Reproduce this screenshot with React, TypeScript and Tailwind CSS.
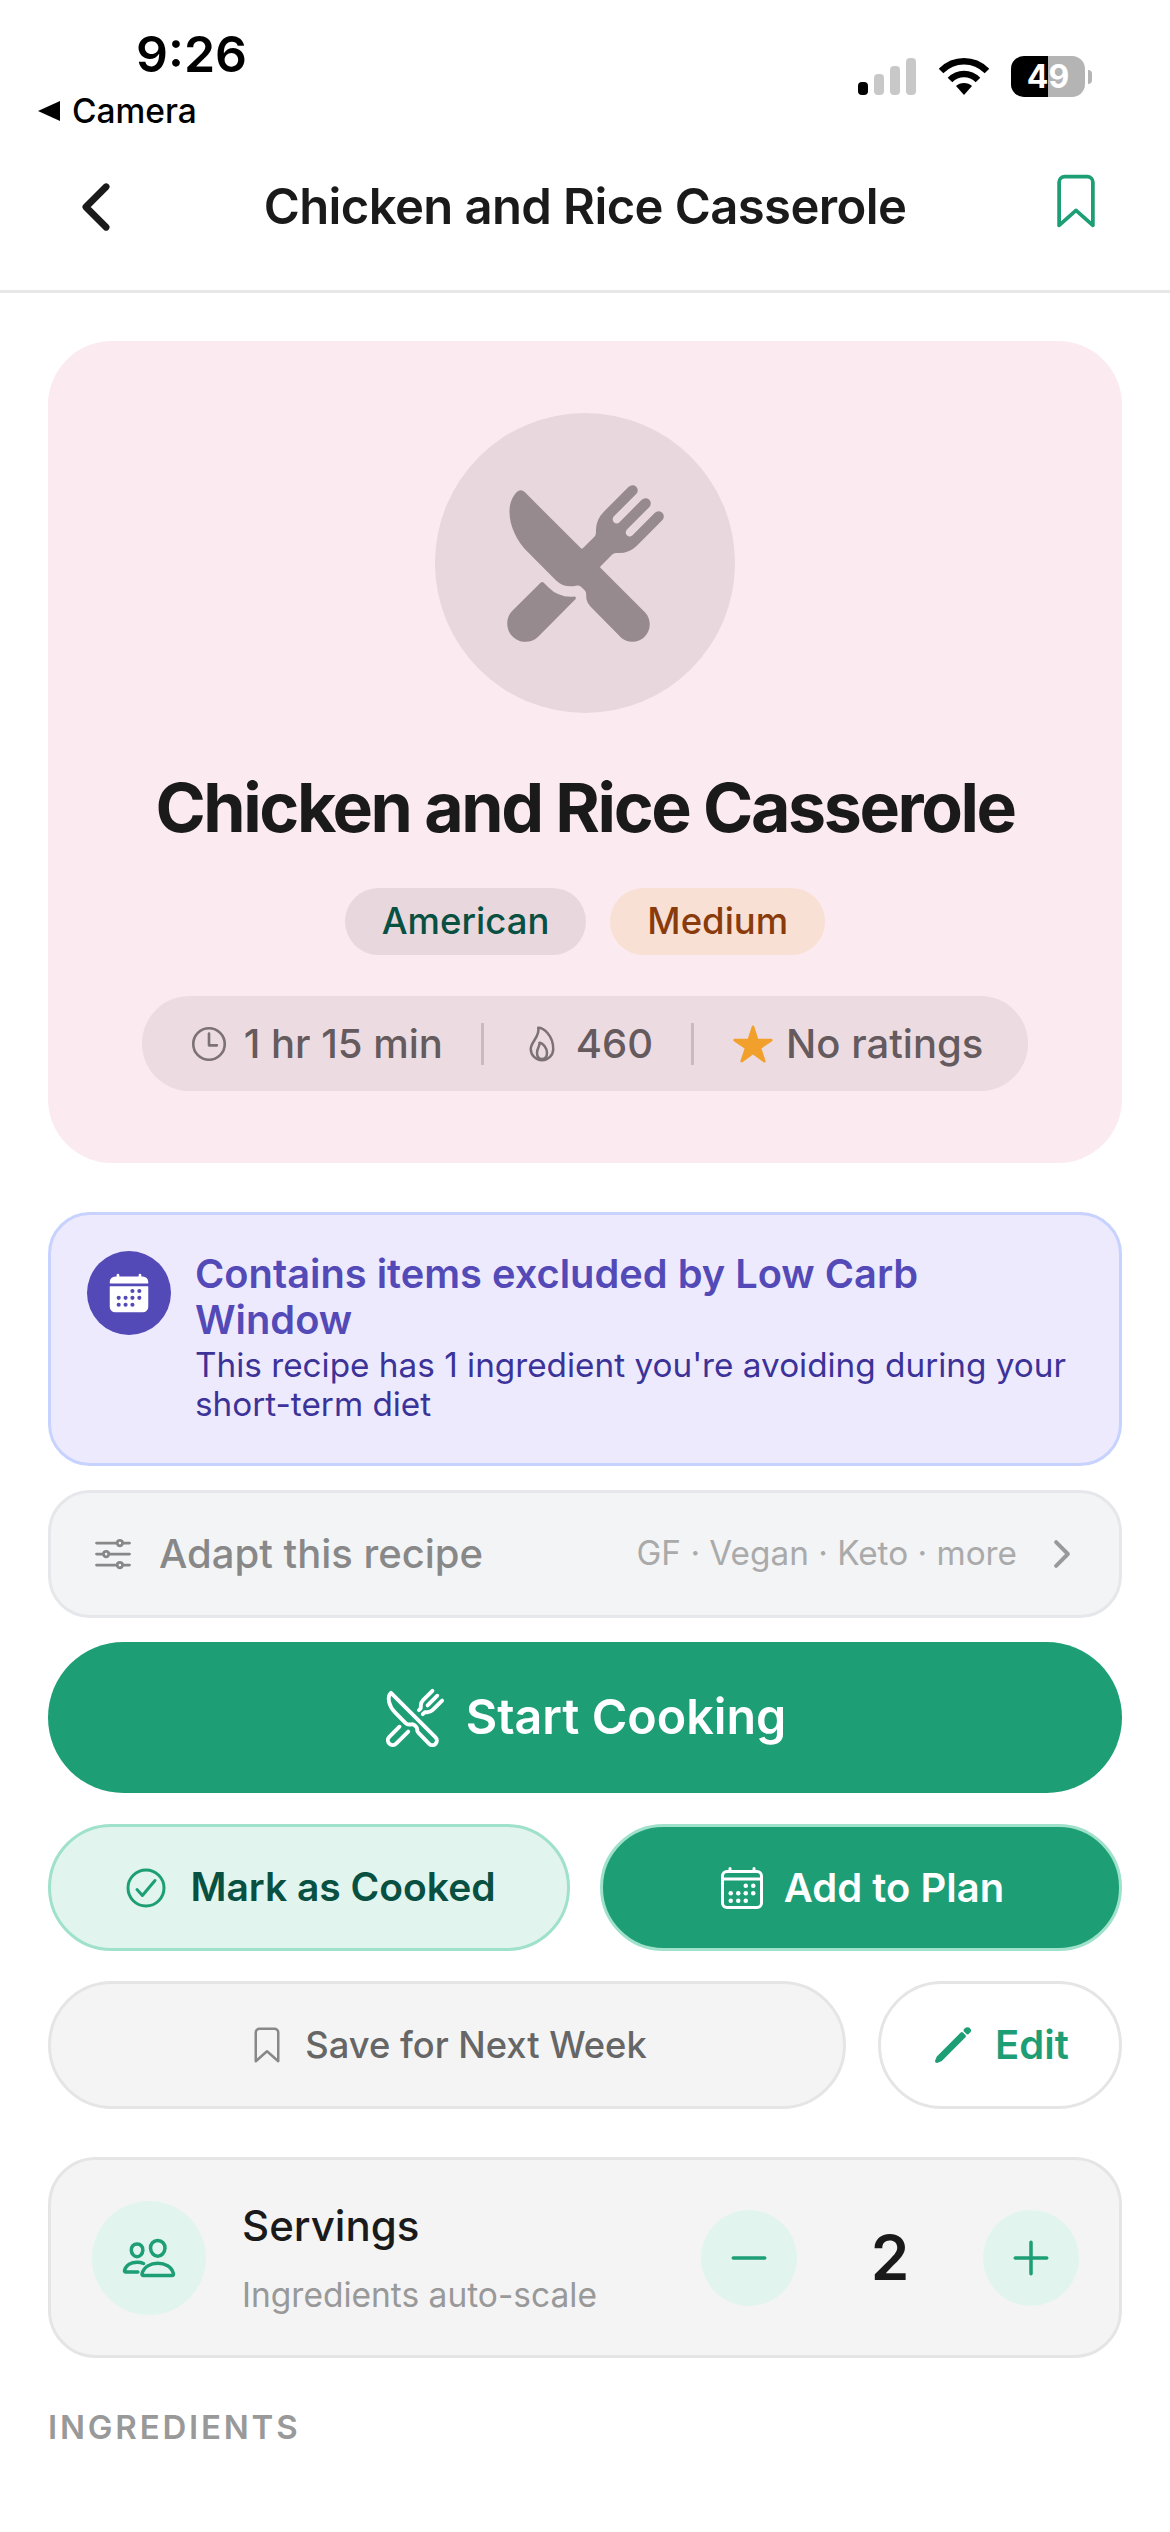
import {
  IoAdd,
  IoBookmarkOutline,
  IoCalendar,
  IoCalendarOutline,
  IoCheckmarkCircleOutline,
  IoChevronBack,
  IoChevronForward,
  IoFlameOutline,
  IoOptionsOutline,
  IoPencil,
  IoPeopleOutline,
  IoRemove,
  IoRestaurant,
  IoRestaurantOutline,
  IoStar,
  IoTimeOutline,
} from 'react-icons/io5'

function StatusBar() {
  return (
    <div className="flex h-[140px] justify-between pl-[38px] pr-[78px] text-black">
      <div className="flex flex-col">
        <div className="mt-[24px] ml-[98px] text-[50px] leading-[60px] font-semibold">9:26</div>
        <div className="mt-[7px] flex items-center gap-[12px] text-[33.5px] leading-[40px]">
          <span className="h-0 w-0 border-y-[10px] border-r-[22px] border-y-transparent border-r-black" />
          <span className="font-medium">Camera</span>
        </div>
      </div>
      <div className="mt-[56px] flex h-[41px] items-center">
        {/* signal */}
        <div className="flex h-[37px] items-end gap-[6px]">
          <span className="h-[13px] w-[10px] rounded-[4px] bg-black" />
          <span className="h-[21px] w-[10px] rounded-[4px] bg-[#c8c8c8]" />
          <span className="h-[29px] w-[10px] rounded-[4px] bg-[#c8c8c8]" />
          <span className="h-[37px] w-[10px] rounded-[4px] bg-[#c8c8c8]" />
        </div>
        {/* wifi */}
        <svg className="ml-[23px]" width="50" height="38" viewBox="0 0 50 38">
          <path d="M2 13 C15 0 35 0 48 13" fill="none" stroke="black" strokeWidth="6.5" />
          <path d="M11 22 C19 14 31 14 39 22" fill="none" stroke="black" strokeWidth="6.5" />
          <path d="M17 28 C21 24 29 24 33 28 L25 37 Z" fill="black" />
        </svg>
        {/* battery */}
        <div className="relative ml-[22px] h-[41px] w-[74px] overflow-hidden rounded-[13px] bg-[#b4b4b4]">
          <div className="h-full w-[37px] bg-black" />
          <div className="absolute inset-0 flex items-center justify-center text-[32px] leading-none font-bold text-white">
            49
          </div>
        </div>
        <span className="ml-[3px] h-[14px] w-[4px] rounded-r-full bg-[#b4b4b4]" />
      </div>
    </div>
  )
}

function NavBar() {
  return (
    <div className="flex h-[153px] items-start border-b-[3px] border-[#e8e8e8] pl-[60px] pr-[64px]">
      <IoChevronBack className="mt-[31px] shrink-0 text-[#1a1a1a]" size={72} />
      <div className="mt-[34px] flex-1 pr-[8px] text-center text-[49px] leading-[66px] font-semibold tracking-[-0.6px] text-[#1a1a1a]">
        Chicken and Rice Casserole
      </div>
      <IoBookmarkOutline className="mt-[31px] shrink-0 text-[#1d9e75]" size={60} />
    </div>
  )
}

function Hero() {
  return (
    <section className="flex flex-col items-center rounded-[64px] bg-[#fbeaf0] pt-[72px] pb-[72px]">
      <div className="flex h-[300px] w-[300px] items-center justify-center rounded-full bg-[#e8d7dd]">
        <IoRestaurant className="text-[#968a8e]" size={167} />
      </div>
      <h1 className="mt-[58px] text-[68px] leading-[72px] font-bold tracking-[-2.4px] text-[#1a1a1a]">
        Chicken and Rice Casserole
      </h1>
      <div className="mt-[45px] flex gap-[24px] text-[36.5px] leading-[67px] font-medium">
        <span className="rounded-full bg-[#e8d7dd] px-[37px] text-[#085041]">American</span>
        <span className="rounded-full bg-[#f9e0d4] px-[37px] text-[#8a3b0c]">Medium</span>
      </div>
      <div className="mt-[41px] flex h-[95px] items-center rounded-full bg-[#ecdce2] pl-[46px] pr-[45px] text-[40px] font-medium text-[#655a5e]">
        <IoTimeOutline className="text-[#7c7175]" size={42} />
        <span className="ml-[14px]">1 hr 15 min</span>
        <span className="mx-[38px] h-[42px] w-[3px] bg-[#c9babf]" />
        <IoFlameOutline className="text-[#7c7175]" size={40} />
        <span className="ml-[14px]">460</span>
        <span className="mx-[38px] h-[42px] w-[3px] bg-[#c9babf]" />
        <IoStar className="text-[#f0a02b]" size={42} />
        <span className="ml-[12px]">No ratings</span>
      </div>
    </section>
  )
}

function DietBanner() {
  return (
    <section className="mt-[49px] flex h-[254px] gap-[24px] rounded-[42px] border-[3px] border-[#c7d2fe] bg-[#eeeafe] pt-[36px] pr-[30px] pl-[36px]">
      <div className="flex h-[84px] w-[84px] shrink-0 items-center justify-center rounded-full bg-[#534ab7]">
        <IoCalendar className="text-white" size={44} />
      </div>
      <div className="min-w-0">
        <div className="max-w-[800px] text-[39.8px] leading-[46px] font-semibold text-[#534ab7]">
          Contains items excluded by Low Carb Window
        </div>
        <div className="mt-[3px] text-[33.3px] leading-[39px] text-[#3c3399]">
          This recipe has 1 ingredient you're avoiding during your short-term diet
        </div>
      </div>
    </section>
  )
}

function AdaptRow() {
  return (
    <div className="mt-[24px] flex h-[128px] items-center rounded-[42px] border-[3px] border-[#e5e7eb] bg-[#f3f4f6] pr-[36px] pl-[40px]">
      <IoOptionsOutline className="text-[#888888]" size={44} />
      <span className="ml-[24px] text-[40px] font-medium text-[#888888]">Adapt this recipe</span>
      <span className="ml-auto text-[33.3px] text-[#aaaaaa]">GF · Vegan · Keto · more</span>
      <IoChevronForward className="ml-[24px] text-[#999999]" size={42} />
    </div>
  )
}

function Actions() {
  return (
    <>
      <button className="mt-[24px] flex h-[151px] w-full items-center justify-center gap-[20px] rounded-full bg-[#1d9e75] text-[48.4px] font-semibold text-white">
        <IoRestaurantOutline size={62} />
        Start Cooking
      </button>
      <div className="mt-[31px] grid grid-cols-2 gap-[30px]">
        <button className="flex h-[127px] items-center justify-center gap-[20px] rounded-full border-[3px] border-[#9fe1cb] bg-[#e1f5ee] text-[39px] font-semibold text-[#085041]">
          <IoCheckmarkCircleOutline className="text-[#1d9e75]" size={48} />
          Mark as Cooked
        </button>
        <button className="flex h-[127px] items-center justify-center gap-[18px] rounded-full border-[3px] border-[#9fe1cb] bg-[#1d9e75] text-[40px] font-semibold text-white">
          <IoCalendarOutline size={48} />
          Add to Plan
        </button>
      </div>
      <div className="mt-[30px] flex gap-[32px]">
        <button className="flex h-[128px] flex-1 items-center justify-center gap-[18px] rounded-full border-[3px] border-[#e5e5e5] bg-[#f4f4f4] text-[36.3px] font-medium text-[#666666]">
          <IoBookmarkOutline className="text-[#888888]" size={40} />
          Save for Next Week
        </button>
        <button className="flex h-[128px] w-[244px] items-center justify-center gap-[20px] rounded-full border-[3px] border-[#e5e5e5] bg-white text-[40px] font-semibold text-[#1d9e75]">
          <IoPencil size={44} />
          Edit
        </button>
      </div>
    </>
  )
}

function Servings() {
  return (
    <section className="mt-[48px] flex h-[201px] items-center rounded-[48px] border-[3px] border-[#e5e5e5] bg-[#f4f4f4] pr-[40px] pl-[41px]">
      <div className="flex h-[114px] w-[114px] items-center justify-center rounded-full bg-[#e1f5ee]">
        <IoPeopleOutline className="text-[#1d9e75]" size={56} />
      </div>
      <div className="ml-[36px] flex flex-col">
        <span className="text-[42px] leading-[48px] font-medium text-[#1a1a1a]">Servings</span>
        <span className="mt-[26px] text-[33.5px] leading-[38px] text-[#999999]">Ingredients auto-scale</span>
      </div>
      <div className="ml-auto flex items-center">
        <div className="flex h-[96px] w-[96px] items-center justify-center rounded-full bg-[#e1f5ee]">
          <IoRemove className="text-[#1d9e75]" size={56} />
        </div>
        <span className="w-[186px] text-center text-[62px] font-semibold text-[#1a1a1a]">2</span>
        <div className="flex h-[96px] w-[96px] items-center justify-center rounded-full bg-[#e1f5ee]">
          <IoAdd className="text-[#1d9e75]" size={56} />
        </div>
      </div>
    </section>
  )
}

export default function App() {
  return (
    <div className="h-[2532px] overflow-hidden bg-white font-['Inter',sans-serif]">
      <StatusBar />
      <NavBar />
      <main className="px-[48px] pt-[48px]">
        <Hero />
        <DietBanner />
        <AdaptRow />
        <Actions />
        <Servings />
        <h2 className="mt-[49px] text-[33px] leading-[40px] font-semibold tracking-[2.8px] text-[#999999]">
          INGREDIENTS
        </h2>
      </main>
    </div>
  )
}
